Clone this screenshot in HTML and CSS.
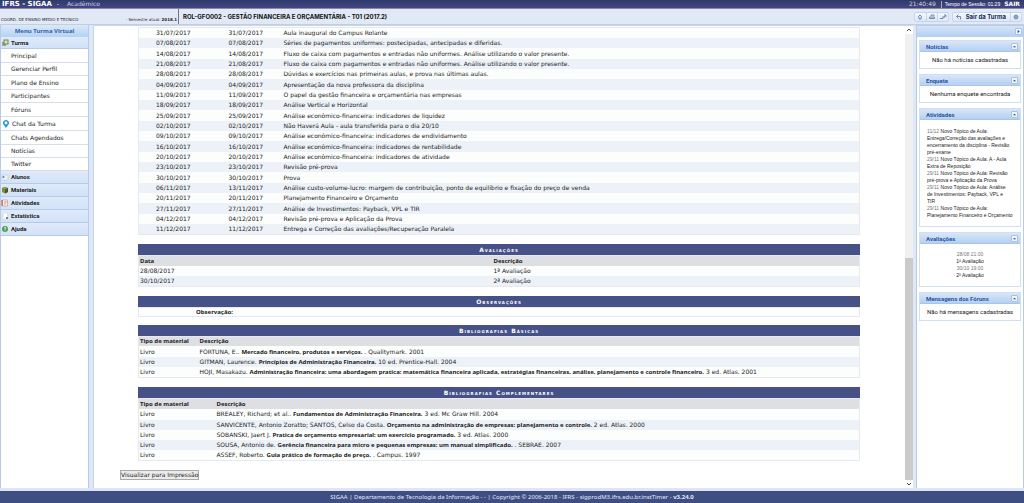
FILE: index.html
```
<!DOCTYPE html>
<html lang="pt-BR">
<head>
<meta charset="utf-8">
<title>SIGAA - Turma Virtual</title>
<link rel="stylesheet" href="styles.css">
</head>
<body>
<header class="topbar">
  <strong class="brand">IFRS - SIGAA</strong><span class="brand-dash">-</span><span class="module">Acadêmico</span>
  <span class="clock">21:40:49</span>
  <span class="session">Tempo de Sessão: 01:29</span>
  <a class="logout" href="#">SAIR</a>
</header>
<div class="toolbar">
  <div class="context"><span>COORD. DE ENSINO MEDIO E TECNICO</span><span>- Semestre atual: <b>2018.1</b></span></div>
  <h1 class="course">ROL-GFO002 - GESTÃO FINANCEIRA E ORÇAMENTÁRIA - T01 (2017.2)</h1>
  <div class="tools">
    <div class="group">
      <button aria-label="Início"><svg viewBox="0 0 8 8"><path d="M2 4L4 2 6 4M3 4V6H5V4"/></svg></button>
      <button aria-label="Imprimir"><svg viewBox="0 0 8 8"><path d="M3 3V2H6V3M1.500 4H6.500V5.500H1.500Z"/></svg></button>
      <button aria-label="Permissão"><svg viewBox="0 0 8 8"><path d="M1 5.500H4L6.500 2.500M3 4H6M5 2H7V4"/></svg></button>
    </div>
    <div class="group">
      <button class="leave"><svg viewBox="0 0 8 8"><path d="M3.500 1.500L1.500 3.500 3.500 5.500M1.500 3.500H5.500V6.500"/></svg>Sair da Turma</button>
      <button aria-label="Ajuda"><svg viewBox="0 0 8 8"><circle cx="4" cy="4" r="2"/><path d="M2 4H6M4 2V6"/></svg></button>
    </div>
  </div>
</div>
<div class="layout">
  <nav class="menu">
    <h2 class="menu-title">Menu Turma Virtual</h2>
    <a class="section first" href="#"><svg viewBox="0 0 8 8"><rect x="1" y="3" width="4" height="4" fill="#9aa873"/><rect x="3" y="1" width="4" height="4" fill="#dbe5b8" stroke="#71805c"/></svg>Turma</a>
    <ul class="items">
      <li><a href="#">Principal</a></li>
      <li><a href="#">Gerenciar Perfil</a></li>
      <li><a href="#">Plano de Ensino</a></li>
      <li><a href="#">Participantes</a></li>
      <li><a href="#">Fóruns</a></li>
      <li class="chat"><svg viewBox="0 0 8 10"><path d="M4 10L1 6A3.700 3.700 0 1 1 7 6Z" fill="#2b9fd8"/><circle cx="4" cy="3.700" r="1.700" fill="#fff"/></svg><a href="#">Chat da Turma</a></li>
      <li><a href="#">Chats Agendados</a></li>
      <li><a href="#">Notícias</a></li>
      <li><a href="#">Twitter</a></li>
    </ul>
    <a class="section" href="#"><svg viewBox="0 0 8 8"><rect x="1" y="2" width="6" height="5" fill="#edf2fa" stroke="#b5c4d8" stroke-width=".5"/><circle cx="2.500" cy="4" r="1" fill="#537db8"/></svg>Alunos</a>
    <a class="section" href="#"><svg viewBox="0 0 8 8"><path d="M1 2L4 1 7 2V6L4 7.500 1 6Z" fill="#8b8745"/><path d="M1 2L4 1 7 2 4 3.500Z" fill="#6bad3d"/><path d="M4 3.500L7 2V6L4 7.500Z" fill="#4c552b"/></svg>Materiais</a>
    <a class="section" href="#"><svg viewBox="0 0 8 8"><path d="M1.500 1H6.500V7H1.500Z" fill="#fff6ee" stroke="#c58c77" stroke-width=".6"/><path d="M3 3H6M3 5H5" stroke="#cc6655" stroke-width=".7"/><path d="M1 1V7" stroke="#a8573d"/></svg>Atividades</a>
    <a class="section" href="#"><svg viewBox="0 0 8 8"><path d="M2 1H6.500V7H2Z" fill="#fff" stroke="#c5d0dc" stroke-width=".5"/><path d="M5 5H7V7H5Z" fill="#6b8d58"/></svg>Estatística</a>
    <a class="section" href="#"><svg viewBox="0 0 8 8"><circle cx="4" cy="4" r="3" fill="#4f9f4f"/><path d="M3 3.200Q4 1.800 5 3Q5 3.700 4 4.200V4.700M4 5.500V6.200" fill="none" stroke="#fff" stroke-width=".8"/></svg>Ajuda</a>
  </nav>
  <main class="content">
    <div class="sheet">
      <table class="grid schedule">
        <colgroup><col class="start"><col class="end"><col></colgroup>
        <tbody>
        <tr><td>31/07/2017</td><td>31/07/2017</td><td>Aula inaugural do Campus Rolante</td></tr>
        <tr><td>07/08/2017</td><td>07/08/2017</td><td>Séries de pagamentos uniformes: postecipadas, antecipadas e diferidas.</td></tr>
        <tr><td>14/08/2017</td><td>14/08/2017</td><td>Fluxo de caixa com pagamentos e entradas não uniformes. Análise utilizando o valor presente.</td></tr>
        <tr><td>21/08/2017</td><td>21/08/2017</td><td>Fluxo de caixa com pagamentos e entradas não uniformes. Análise utilizando o valor presente.</td></tr>
        <tr><td>28/08/2017</td><td>28/08/2017</td><td>Dúvidas e exercícios nas primeiras aulas, e prova nas últimas aulas.</td></tr>
        <tr><td>04/09/2017</td><td>04/09/2017</td><td>Apresentação da nova professora da disciplina</td></tr>
        <tr><td>11/09/2017</td><td>11/09/2017</td><td>O papel da gestão financeira e orçamentária nas empresas</td></tr>
        <tr><td>18/09/2017</td><td>18/09/2017</td><td>Análise Vertical e Horizontal</td></tr>
        <tr><td>25/09/2017</td><td>25/09/2017</td><td>Análise econômico-financeira: indicadores de liquidez</td></tr>
        <tr><td>02/10/2017</td><td>02/10/2017</td><td>Não Haverá Aula - aula transferida para o dia 20/10</td></tr>
        <tr><td>09/10/2017</td><td>09/10/2017</td><td>Análise econômico-financeira: indicadores de endividamento</td></tr>
        <tr><td>16/10/2017</td><td>16/10/2017</td><td>Análise econômico-financeira: indicadores de rentabilidade</td></tr>
        <tr><td>20/10/2017</td><td>20/10/2017</td><td>Análise econômico-financeira: indicadores de atividade</td></tr>
        <tr><td>23/10/2017</td><td>23/10/2017</td><td>Revisão pré-prova</td></tr>
        <tr><td>30/10/2017</td><td>30/10/2017</td><td>Prova</td></tr>
        <tr><td>06/11/2017</td><td>13/11/2017</td><td>Análise custo-volume-lucro: margem de contribuição, ponto de equilíbrio e fixação do preço de venda</td></tr>
        <tr><td>20/11/2017</td><td>20/11/2017</td><td>Planejamento Financeiro e Orçamento</td></tr>
        <tr><td>27/11/2017</td><td>27/11/2017</td><td>Análise de Investimentos: Payback, VPL e TIR</td></tr>
        <tr><td>04/12/2017</td><td>04/12/2017</td><td>Revisão pré-prova e Aplicação da Prova</td></tr>
        <tr><td>11/12/2017</td><td>11/12/2017</td><td>Entrega e Correção das avaliações/Recuperação Paralela</td></tr>
        </tbody>
      </table>
      <table class="grid exams">
        <caption>Avaliações</caption>
        <colgroup><col class="date"><col></colgroup>
        <thead><tr><th>Data</th><th>Descrição</th></tr></thead>
        <tbody>
        <tr><td>28/08/2017</td><td>1ª Avaliação</td></tr>
        <tr><td>30/10/2017</td><td>2ª Avaliação</td></tr>
        </tbody>
      </table>
      <table class="grid notes">
        <caption>Observações</caption>
        <tbody><tr><td><b>Observação:</b></td></tr></tbody>
      </table>
      <table class="grid books">
        <caption>Bibliografias Básicas</caption>
        <colgroup><col class="kind"><col></colgroup>
        <thead><tr><th>Tipo de material</th><th>Descrição</th></tr></thead>
        <tbody>
        <tr><td>Livro</td><td>FORTUNA, E.. <b>Mercado financeiro, produtos e serviços.</b> . Qualitymark. 2001</td></tr>
        <tr><td>Livro</td><td>GITMAN, Laurence. <b>Princípios de Administração Financeira.</b> 10 ed. Prentice-Hall. 2004</td></tr>
        <tr><td>Livro</td><td>HOJI, Masakazu. <b>Administração financeira: uma abordagem pratica: matemática financeira aplicada, estratégias financeiras, análise, planejamento e controle financeiro.</b> 3 ed. Atlas. 2001</td></tr>
        </tbody>
      </table>
      <table class="grid books">
        <caption>Bibliografias Complementares</caption>
        <colgroup><col class="kind-wide"><col></colgroup>
        <thead><tr><th>Tipo de material</th><th>Descrição</th></tr></thead>
        <tbody>
        <tr><td>Livro</td><td>BREALEY, Richard; et al.. <b>Fundamentos de Administração Financeira.</b> 3 ed. Mc Graw Hill. 2004</td></tr>
        <tr><td>Livro</td><td>SANVICENTE, Antonio Zoratto; SANTOS, Celso da Costa. <b>Orçamento na administração de empresas: planejamento e controle.</b> 2 ed. Atlas. 2000</td></tr>
        <tr><td>Livro</td><td>SOBANSKI, Jaert J. <b>Pratica de orçamento empresarial: um exercício programado.</b> 3 ed. Atlas. 2000</td></tr>
        <tr><td>Livro</td><td>SOUSA, Antonio de. <b>Gerência financeira para micro e pequenas empresas: um manual simplificado.</b> . SEBRAE. 2007</td></tr>
        <tr><td>Livro</td><td>ASSEF, Roberto. <b>Guia prático de formação de preço.</b> . Campus. 1997</td></tr>
        </tbody>
      </table>
      <button class="print">Visualizar para Impressão</button>
    </div>
    <div class="scrollbar">
      <svg viewBox="0 0 8 8"><path d="M2 5L4 3 6 5"/></svg>
      <div class="track"></div>
      <div class="thumb"></div>
      <svg viewBox="0 0 8 8"><path d="M2 3L4 5 6 3"/></svg>
    </div>
  </main>
  <aside class="side">
    <div class="side-top"><button class="toggle" aria-label="Recolher"><svg viewBox="0 0 6 6"><path d="M2 1L4.500 3 2 5Z"/></svg></button></div>
    <div class="panels">
      <section class="panel"><h2>Notícias<button class="toggle" aria-label="Recolher Notícias"><svg viewBox="0 0 6 6"><path d="M1 4L3 2 5 4Z"/></svg></button></h2><p class="empty">Não há notícias cadastradas</p></section>
      <section class="panel"><h2>Enquete<button class="toggle" aria-label="Recolher Enquete"><svg viewBox="0 0 6 6"><path d="M1 4L3 2 5 4Z"/></svg></button></h2><p class="empty">Nenhuma enquete encontrada</p></section>
      <section class="panel"><h2>Atividades<button class="toggle" aria-label="Recolher Atividades"><svg viewBox="0 0 6 6"><path d="M1 4L3 2 5 4Z"/></svg></button></h2>
        <ul class="feed">
          <li><time>11/12</time> Novo Tópico de Aula:<br>Entrega/Correção das avaliações e<br>encerramento da disciplina - Revisão<br>pré-exame</li>
          <li><time>29/11</time> Novo Tópico de Aula: A - Aula<br>Extra de Reposição</li>
          <li><time>29/11</time> Novo Tópico de Aula: Revisão<br>pré-prova e Aplicação da Prova</li>
          <li><time>29/11</time> Novo Tópico de Aula: Análise<br>de Investimentos: Payback, VPL e<br>TIR</li>
          <li><time>29/11</time> Novo Tópico de Aula:<br>Planejamento Financeiro e Orçamento</li>
        </ul></section>
      <section class="panel"><h2>Avaliações<button class="toggle" aria-label="Recolher Avaliações"><svg viewBox="0 0 6 6"><path d="M1 4L3 2 5 4Z"/></svg></button></h2>
        <ul class="feed dates">
          <li><time>28/08 21:00</time><br>1ª Avaliação</li>
          <li><time>30/10 19:00</time><br>2ª Avaliação</li>
        </ul></section>
      <section class="panel"><h2>Mensagens dos Fóruns<button class="toggle" aria-label="Recolher Mensagens"><svg viewBox="0 0 6 6"><path d="M1 4L3 2 5 4Z"/></svg></button></h2><p class="empty">Não há mensagens cadastradas</p></section>
    </div>
  </aside>
</div>
<footer class="footer">SIGAA | Departamento de Tecnologia da Informação - - | Copyright © 2006-2018 - IFRS - sigprodM3.ifrs.edu.br.instTimer - <b>v3.24.0</b></footer>
</body>
</html>
```

FILE: styles.css
```
* { box-sizing: border-box; }
body {
  margin: 0;
  height: 100vh;
  display: flex;
  flex-direction: column;
  font: 6px/10px "DejaVu Sans", sans-serif;
  color: #222;
  background: #dfe8f6;
}
a { color: inherit; text-decoration: none; }
h1, h2, p, ul { margin: 0; padding: 0; font-size: inherit; }
ul { list-style: none; }
button { font: inherit; color: inherit; padding: 0; border: 0; background: none; }
svg { width: 8px; height: 8px; display: block; flex: none; }

.topbar {
  height: 9px;
  padding: 0 4px 0 2px;
  display: flex;
  align-items: center;
  background: linear-gradient(#2b3b69, #454484);
  color: #fff;
  border-bottom: 1px solid #8c8998;
}
.brand { font-size: 7px; }
.brand-dash { margin: 0 8px 0 5px; }
.module { color: #c7d2ea; }
.clock { margin-left: auto; color: #d9d4d0; }
.session { font: 5px/7px "Liberation Sans", sans-serif; border-left: 1px solid #aaa; margin: 0 4px 0 5px; padding-left: 3px; }
.logout { font-weight: bold; }

.toolbar { height: 16px; display: flex; background: #e1e9f6; border-bottom: 1px solid #c3cedf; }
.context { width: 179px; flex: none; display: flex; justify-content: space-between; align-items: flex-end; border-right: 1px solid #777; font-size: 4px; line-height: 7px; padding: 0 1px 1px; }
.course { font: bold 6px/16px Inter, sans-serif; padding-left: 4px; color: #111; }
.tools { margin-left: auto; display: flex; align-items: center; gap: 3px; padding-right: 2px; }
.group { height: 10px; display: flex; align-items: center; border: 1px solid #c5d6ec; border-radius: 2px; background: linear-gradient(#f4f8fd, #dce8f7); }
.group button { display: flex; align-items: center; justify-content: center; width: 11px; height: 8px; border-left: 1px solid #c5d6ec; font: bold 6px/8px Inter, sans-serif; color: #1c2e57; }
.group button:first-child { border: 0; }
.group .leave { width: auto; padding: 0 4px 0 2px; gap: 3px; }
.group svg { fill: none; stroke: #7189ae; stroke-width: 1; }

.layout { flex: 1; min-height: 0; display: flex; border-bottom: 3px solid #dce6f8; }
.menu { width: 89px; flex: none; background: #fff; border: 1px solid #b5cbe9; border-width: 0 1px; }
.menu-title { height: 12px; font: bold 6px/12px "Noto Sans", sans-serif; text-align: center; color: #2f62ae; background: linear-gradient(#dbe8f9, #b6d2f3); }
.section { height: 13px; display: flex; align-items: center; gap: 2px; font: bold 6px/10px Roboto, sans-serif; background: linear-gradient(#dfeafa, #d2e2f8); border-bottom: 1px solid #b5cbe9; }
.first { height: 12px; }
.items li { height: 13px; display: flex; align-items: center; padding-left: 10px; border-bottom: 1px solid #d8dee6; }
.items li:nth-child(odd):not(:last-child) { height: 14px; }
.items .chat { height: 14px; padding-left: 1px; gap: 2px; }

.content { flex: 1; min-width: 0; display: flex; margin-left: 4px; background: #fff; border-left: 1px solid #c4d6ee; border-top: 1px solid #c4d6ee; }
.sheet { flex: 1; min-width: 0; padding: 1px 45px 0 44px; overflow: hidden; }
.grid { width: 100%; border-collapse: collapse; table-layout: fixed; border: 1px solid #e6e9ee; margin-bottom: 9px; }
.grid caption { height: 11px; line-height: 11px; text-align: center; font-weight: bold; font-variant: small-caps; letter-spacing: 1px; color: #fff; background: #465287; }
.grid td, .grid th { height: 10px; padding: 0 0 0 1px; line-height: 10px; text-align: left; white-space: nowrap; }
.grid b, .grid th { font-family: "Noto Sans", sans-serif; line-height: 8px; }
.grid th { background: #dedfe3; }
.grid tbody tr { background: #fcfdfd; }
.grid tbody tr:nth-child(even) { background: #edf1f8; }
.schedule tbody tr:nth-child(3n) td, .books tbody tr:first-child td { height: 11px; }
.schedule td:first-child { padding-left: 17px; }
.schedule .start { width: 89px; }
.schedule .end { width: 55px; }
.exams .date { width: 354px; }
.notes { margin-bottom: 8px; }
.notes td { padding-left: 57px; height: 8px; line-height: 8px; }
.kind { width: 60px; }
.kind-wide { width: 77px; }
.print { margin-left: -18px; border: 1px solid #aaa; background: #ececec; line-height: 8px; display: block; }
.scrollbar { width: 8px; display: flex; flex-direction: column; background: #f0f0f0; }
.scrollbar svg { fill: none; stroke: #444; stroke-width: 1; background: #fff; }
.track { flex: 224; }
.thumb { flex: 222; background: #cbcbcb; }

.side { width: 108px; flex: none; margin-left: 3px; background: #fff; border: 1px solid #b5cbe9; border-bottom: 0; }
.side-top { height: 11px; display: flex; justify-content: flex-end; align-items: center; padding-right: 1px; background: linear-gradient(#d4e4f8, #b3cff2); }
.toggle { width: 7px; height: 7px; background: #f1f7ff; border: 1px solid #a9c2e3; border-radius: 1px; }
.toggle svg { width: 5px; height: 5px; fill: #234a86; }
.panels { padding: 3px 2px; display: flex; flex-direction: column; gap: 5px; }
.panel { border: 1px solid #d2dfef; font: 6px/7px Roboto, sans-serif; }
.panel h2 { height: 11px; display: flex; justify-content: space-between; align-items: center; padding: 0 2px 0 6px; color: #2754a0; background: linear-gradient(#d8e6f9, #b5d0f2); border-bottom: 1px solid #a9c5ea; }
.empty { text-align: center; line-height: 16px; }
.feed { padding: 8px 0 7px 7px; white-space: nowrap; font: 5px/7px "Liberation Sans", sans-serif; }
.feed time { color: #777; }
.dates { text-align: center; padding: 7px 0; }

.footer { height: 12px; flex: none; font: 6px/12px "Noto Sans", sans-serif; text-align: center; color: #e4e9f7; background: #3f4e82; }
```
